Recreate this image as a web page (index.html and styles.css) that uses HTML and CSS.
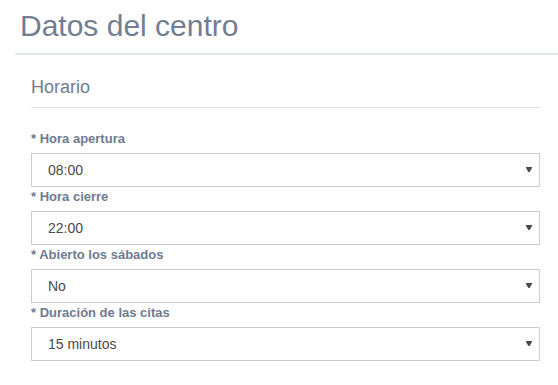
FILE: index.html
```html
<!DOCTYPE html>
<html lang="es">
<head>
<meta charset="utf-8">
<title>Datos del centro</title>
<link rel="stylesheet" href="styles.css">
</head>
<body>
<header class="page-header">
  <h1 class="page-title">Datos del centro</h1>
</header>
<section class="card">
  <h2 class="card-title">Horario</h2>
  <form class="form">
    <label class="field-label" for="apertura">* Hora apertura</label>
    <div class="select-wrap">
      <select id="apertura" class="select"><option>08:00</option></select>
      <svg class="caret" width="6" height="5" viewBox="0 0 6 5"><polygon points="0,0 6,0 6,1 3.6,5 2.4,5 0,1" fill="#4a4a4a"/></svg>
    </div>
    <label class="field-label" for="cierre">* Hora cierre</label>
    <div class="select-wrap">
      <select id="cierre" class="select"><option>22:00</option></select>
      <svg class="caret" width="6" height="5" viewBox="0 0 6 5"><polygon points="0,0 6,0 6,1 3.6,5 2.4,5 0,1" fill="#4a4a4a"/></svg>
    </div>
    <label class="field-label" for="sabados">* Abierto los sábados</label>
    <div class="select-wrap">
      <select id="sabados" class="select"><option>No</option></select>
      <svg class="caret" width="6" height="5" viewBox="0 0 6 5"><polygon points="0,0 6,0 6,1 3.6,5 2.4,5 0,1" fill="#4a4a4a"/></svg>
    </div>
    <label class="field-label" for="duracion">* Duración de las citas</label>
    <div class="select-wrap">
      <select id="duracion" class="select"><option>15 minutos</option></select>
      <svg class="caret" width="6" height="5" viewBox="0 0 6 5"><polygon points="0,0 6,0 6,1 3.6,5 2.4,5 0,1" fill="#4a4a4a"/></svg>
    </div>
  </form>
</section>
</body>
</html>
```
FILE: styles.css
```css
html, body {
  margin: 0;
  padding: 0;
  background: #ffffff;
  font-family: "Liberation Sans", Arial, sans-serif;
}

.page-header {
  margin-left: 15px;
  padding: 8px 0 9px 5px;
  border-bottom: 2px solid #e4e8ec;
}

.page-title {
  margin: 0;
  font-size: 30px;
  font-weight: normal;
  line-height: 36px;
  color: #717e93;
}

.card {
  margin: 20px 18px 0 31px;
}

.card-title {
  margin: 0;
  padding-bottom: 8px;
  font-size: 18px;
  font-weight: normal;
  line-height: 24px;
  color: #6f7c91;
  border-bottom: 1px solid #e3e3e3;
}

.form {
  display: flex;
  flex-direction: column;
  padding-top: 21px;
}

.field-label {
  display: block;
  font-size: 13px;
  font-weight: bold;
  line-height: 20px;
  color: #6e7b8f;
  margin-bottom: 4px;
}

.select-wrap {
  position: relative;
}

.select {
  display: block;
  width: 100%;
  height: 34px;
  margin: 0;
  padding: 0 30px 0 16px;
  box-sizing: border-box;
  border: 1px solid #cccccc;
  border-radius: 0;
  background: #ffffff;
  font-family: "Liberation Sans", Arial, sans-serif;
  font-size: 14px;
  color: #4a4a4a;
  -webkit-appearance: none;
  appearance: none;
  outline: none;
}

.caret {
  position: absolute;
  right: 8px;
  top: 14px;
  pointer-events: none;
}
```
